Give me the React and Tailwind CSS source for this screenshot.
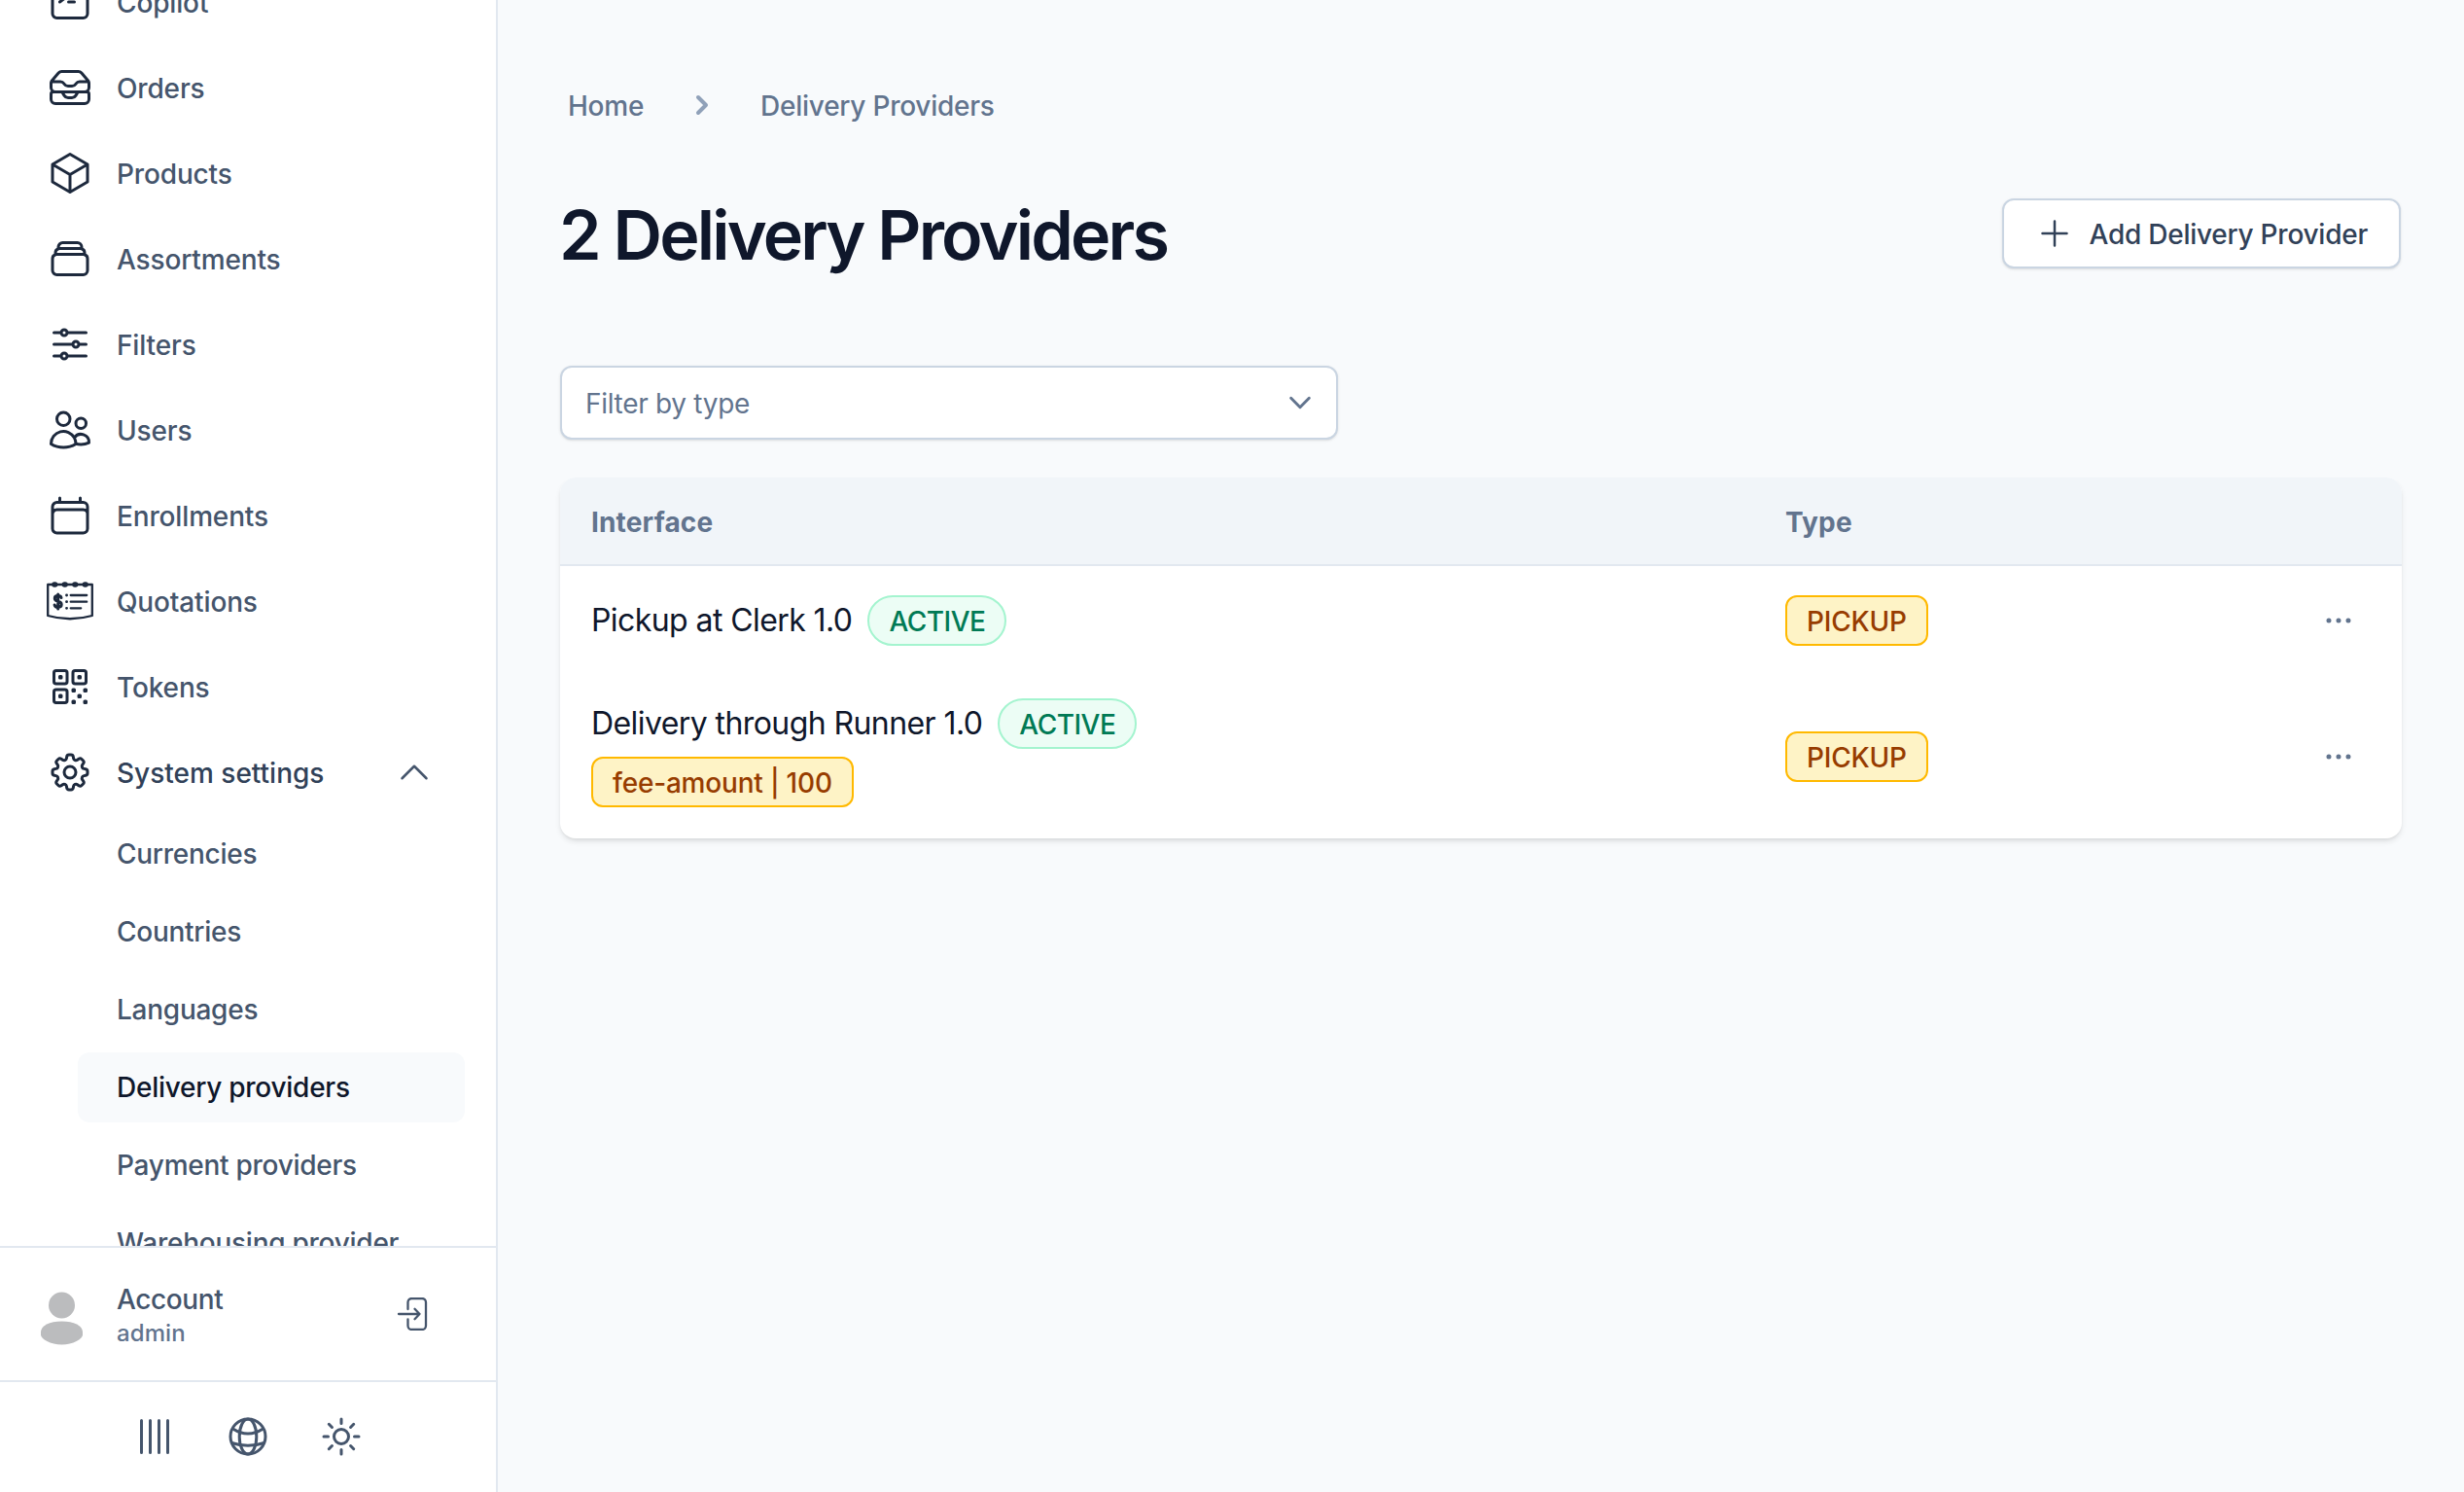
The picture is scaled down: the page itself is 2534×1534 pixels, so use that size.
import { HiOutlineCommandLine, HiOutlineInboxStack, HiOutlineCube, HiOutlineRectangleStack, HiOutlineAdjustmentsHorizontal, HiOutlineUsers, HiOutlineQrCode, HiOutlineCog8Tooth, HiOutlineBars4, HiOutlineSun, HiOutlineChevronUp, HiOutlinePlus, HiEllipsisHorizontal } from "react-icons/hi2";

function CalendarIcon({ className }) {
  return (
    <svg viewBox="0 0 24 24" fill="none" stroke="currentColor" strokeWidth="1.5" strokeLinecap="round" strokeLinejoin="round" className={className}>
      <path d="M6.75 3v2.25M17.25 3v2.25M3 18.75V7.5a2.25 2.25 0 0 1 2.25-2.25h13.5A2.25 2.25 0 0 1 21 7.5v11.25m-18 0A2.25 2.25 0 0 0 5.25 21h13.5A2.25 2.25 0 0 0 21 18.75m-18 0v-7.5A2.25 2.25 0 0 1 5.25 9h13.5A2.25 2.25 0 0 1 21 11.25v7.5" />
    </svg>
  );
}

function QuoteIcon({ className }) {
  return (
    <svg viewBox="0 0 48 48" fill="none" stroke="currentColor" strokeWidth="2.3" strokeLinecap="round" className={className}>
      <path d="M1.200 7h45.600v32q-22.800 6.500-45.600 0z" strokeLinejoin="round" />
      <path d="M8 7h.6M18.400 7h.6M29 7h.6M39.400 7h.6" strokeWidth="5.600" />
      <path d="M15 20.500c-.3-1.500-1.700-2-3.400-2-1.900 0-3.300.9-3.300 2.700 0 1.900 1.600 2.500 3.400 3s3.500 1.200 3.500 3.200c0 1.900-1.600 2.900-3.500 2.900s-3.300-.8-3.600-2.400M11.700 17v15" strokeWidth="3" />
      <path d="M24.700 18h16.500M24.700 24.700h16.500M24.700 31.300h10.500" />
      <path d="M20.500 18h.1M20.500 24.700h.1M20.500 31.300h.1" strokeWidth="2.800" />
    </svg>
  );
}

function GlobeIcon({ className }) {
  return (
    <svg viewBox="0 0 48 48" fill="none" stroke="currentColor" strokeWidth="3" className={className}>
      <circle cx="24" cy="24" r="18" />
      <ellipse cx="24" cy="24" rx="8.800" ry="18" />
      <path d="M8.500 16Q24 26 39.500 16M7.200 30.500Q24 36 40.800 30.500" />
    </svg>
  );
}

function LogoutIcon({ className }) {
  return (
    <svg viewBox="0 0 32 34" fill="none" stroke="currentColor" strokeWidth="2.3" strokeLinecap="round" strokeLinejoin="round" className={className}>
      <path d="M11.500 12V5a4 4 0 0 1 4-4h10.500a4 4 0 0 1 4 4v24a4 4 0 0 1-4 4H15.500a4 4 0 0 1-4-4v-6.500" />
      <path d="M2 17h21.500M18.500 11.800l5 5.200-5 5.200" />
    </svg>
  );
}

const nav = [
  { label: "Copilot", Icon: HiOutlineCommandLine },
  { label: "Orders", Icon: HiOutlineInboxStack },
  { label: "Products", Icon: HiOutlineCube },
  { label: "Assortments", Icon: HiOutlineRectangleStack },
  { label: "Filters", Icon: HiOutlineAdjustmentsHorizontal },
  { label: "Users", Icon: HiOutlineUsers },
  { label: "Enrollments", Icon: CalendarIcon },
  { label: "Quotations", Icon: QuoteIcon },
  { label: "Tokens", Icon: HiOutlineQrCode },
];

const settings = ["Currencies", "Countries", "Languages", "Delivery providers", "Payment providers", "Warehousing provider"];

const providers = [
  { name: "Pickup at Clerk 1.0", type: "PICKUP" },
  { name: "Delivery through Runner 1.0", type: "PICKUP", fee: "fee-amount | 100" },
];

function Sidebar() {
  return (
    <aside className="flex h-full w-[512px] shrink-0 flex-col border-r-2 border-slate-200 bg-white">
      <div className="min-h-0 flex-1 overflow-hidden">
        <nav className="-mt-[42px] flex flex-col text-[28px] font-medium tracking-[-0.15px] text-slate-600">
          {nav.map(({ label, Icon }) => (
            <a key={label} className="flex h-[88px] items-center pl-12">
              <Icon className="size-12 shrink-0 text-slate-800" />
              <span className="pt-0.5 pl-6">{label}</span>
            </a>
          ))}
          <a className="flex h-[88px] items-center pl-12 tracking-normal text-slate-700">
            <HiOutlineCog8Tooth className="size-12 shrink-0 text-slate-800" />
            <span className="flex-1 pt-0.5 pl-6">System settings</span>
            <HiOutlineChevronUp className="mr-16 size-10 text-slate-600" />
          </a>
          <div className="mt-1 flex flex-col gap-2 pr-8 pl-20 tracking-[-0.26px]">
            {settings.map((label) => (
              <a key={label} className={label === "Delivery providers" ? "flex h-[72px] items-center rounded-xl bg-slate-50 pl-10 text-slate-900" : "flex h-[72px] items-center pl-10"}>
                {label}
              </a>
            ))}
          </div>
        </nav>
      </div>
      <div className="flex h-[138px] shrink-0 items-center border-t-2 border-slate-200 pl-10">
        <svg viewBox="0 0 48 60" className="mt-[6px] h-[60px] w-12 shrink-0 fill-[#bbbcbe]">
          <circle cx="23.500" cy="18" r="13.500" />
          <path d="M2 45.500C2 39 11 34.500 23.500 34.500S45 39 45 45.500v3c0 4-10 10-21.500 10S2 52.500 2 48.500z" />
        </svg>
        <div className="flex-1 pt-0.5 pl-8">
          <div className="text-[28px] leading-9 font-medium tracking-[-0.4px] text-slate-600">Account</div>
          <div className="mt-px text-2xl font-medium tracking-[0.1px] text-slate-500">admin</div>
        </div>
        <LogoutIcon className="mr-[70px] h-[34px] w-8 text-slate-600" />
      </div>
      <div className="flex h-[115px] shrink-0 items-center justify-center gap-12 border-t-2 border-slate-200 pb-0.5 text-slate-600">
        <HiOutlineBars4 className="size-12 rotate-90" />
        <GlobeIcon className="size-12" />
        <HiOutlineSun className="size-12" />
      </div>
    </aside>
  );
}

function Tag({ children }) {
  return <span className="flex h-[52px] items-center rounded-xl border-2 border-amber-400 bg-amber-100 px-5 pt-px text-[28px] font-medium tracking-[-0.2px] text-amber-800">{children}</span>;
}

export default function App() {
  return (
    <div className="flex h-[1534px] w-[2534px] overflow-hidden bg-slate-50 font-['Inter',sans-serif]">
      <Sidebar />
      <main className="flex min-w-0 flex-1 flex-col pr-16 pl-16">
        <div className="mt-[88px] flex h-10 items-center pl-2 text-[28px] font-medium tracking-[-0.25px] text-slate-500">
          <span className="pt-0.5">Home</span>
          <svg viewBox="0 0 40 40" className="mx-10 size-10 fill-none stroke-slate-400" strokeWidth="4" strokeLinecap="round" strokeLinejoin="round">
            <path d="M16 12l8 8-8 8" />
          </svg>
          <span className="pt-0.5">Delivery Providers</span>
        </div>
        <div className="mt-[76px] flex h-[72px] items-center justify-between">
          <h1 className="-ml-px pt-[3px] text-[70px] font-semibold tracking-[-2.85px] text-slate-900">2 Delivery Providers</h1>
          <button className="mr-px flex h-[72px] items-center rounded-xl border-2 border-slate-300 bg-white pr-8 pl-8 text-[28px] font-medium tracking-[-0.25px] text-slate-700 shadow-sm">
            <HiOutlinePlus className="mr-4 size-10" />
            <span className="pt-0.5">Add Delivery Provider</span>
          </button>
        </div>
        <div className="mt-[100px] flex h-[76px] w-[800px] items-center justify-between rounded-xl border-2 border-slate-300 bg-white pr-[21px] pl-6 text-[28px] tracking-[-0.3px] text-slate-500 shadow-sm">
          <span className="pt-0.5">Filter by type</span>
          <svg viewBox="0 0 24 24" className="size-8 fill-none stroke-slate-500" strokeWidth="2.2" strokeLinecap="round" strokeLinejoin="round">
            <path d="M5 8.500l7 7 7-7" />
          </svg>
        </div>
        <section className="mt-[39px] overflow-hidden rounded-2xl bg-white shadow-md">
          <div className="grid h-[91px] grid-cols-[1228px_1fr] items-center border-b-2 border-slate-200 bg-slate-100 pt-[3px] pl-8 text-[28px] font-bold tracking-[0.15px] text-slate-500">
            <span>Interface</span>
            <span>Type</span>
          </div>
          {providers.map(({ name, type, fee }) => (
            <div key={name} className={fee ? "grid h-[168px] grid-cols-[1228px_1fr_auto] items-center pr-[45px] pl-8" : "grid h-[112px] grid-cols-[1228px_1fr_auto] items-center pr-[45px] pl-8"}>
              <div className={fee ? "flex flex-col items-start gap-2 pb-2" : "flex flex-col items-start"}>
                <div className="flex items-center gap-4 text-[32px] leading-[52px] tracking-[-0.58px] text-slate-900">
                  <span className="h-[52px]">{name}</span>
                  <span className="flex h-[52px] items-center rounded-full border-2 border-emerald-200 bg-emerald-50 px-5 pt-px text-[28px] font-medium tracking-[-0.5px] text-emerald-700">ACTIVE</span>
                </div>
                {fee && <Tag>{fee}</Tag>}
              </div>
              <div className="flex"><Tag>{type}</Tag></div>
              <HiEllipsisHorizontal className="size-10 text-slate-500" />
            </div>
          ))}
        </section>
      </main>
    </div>
  );
}
